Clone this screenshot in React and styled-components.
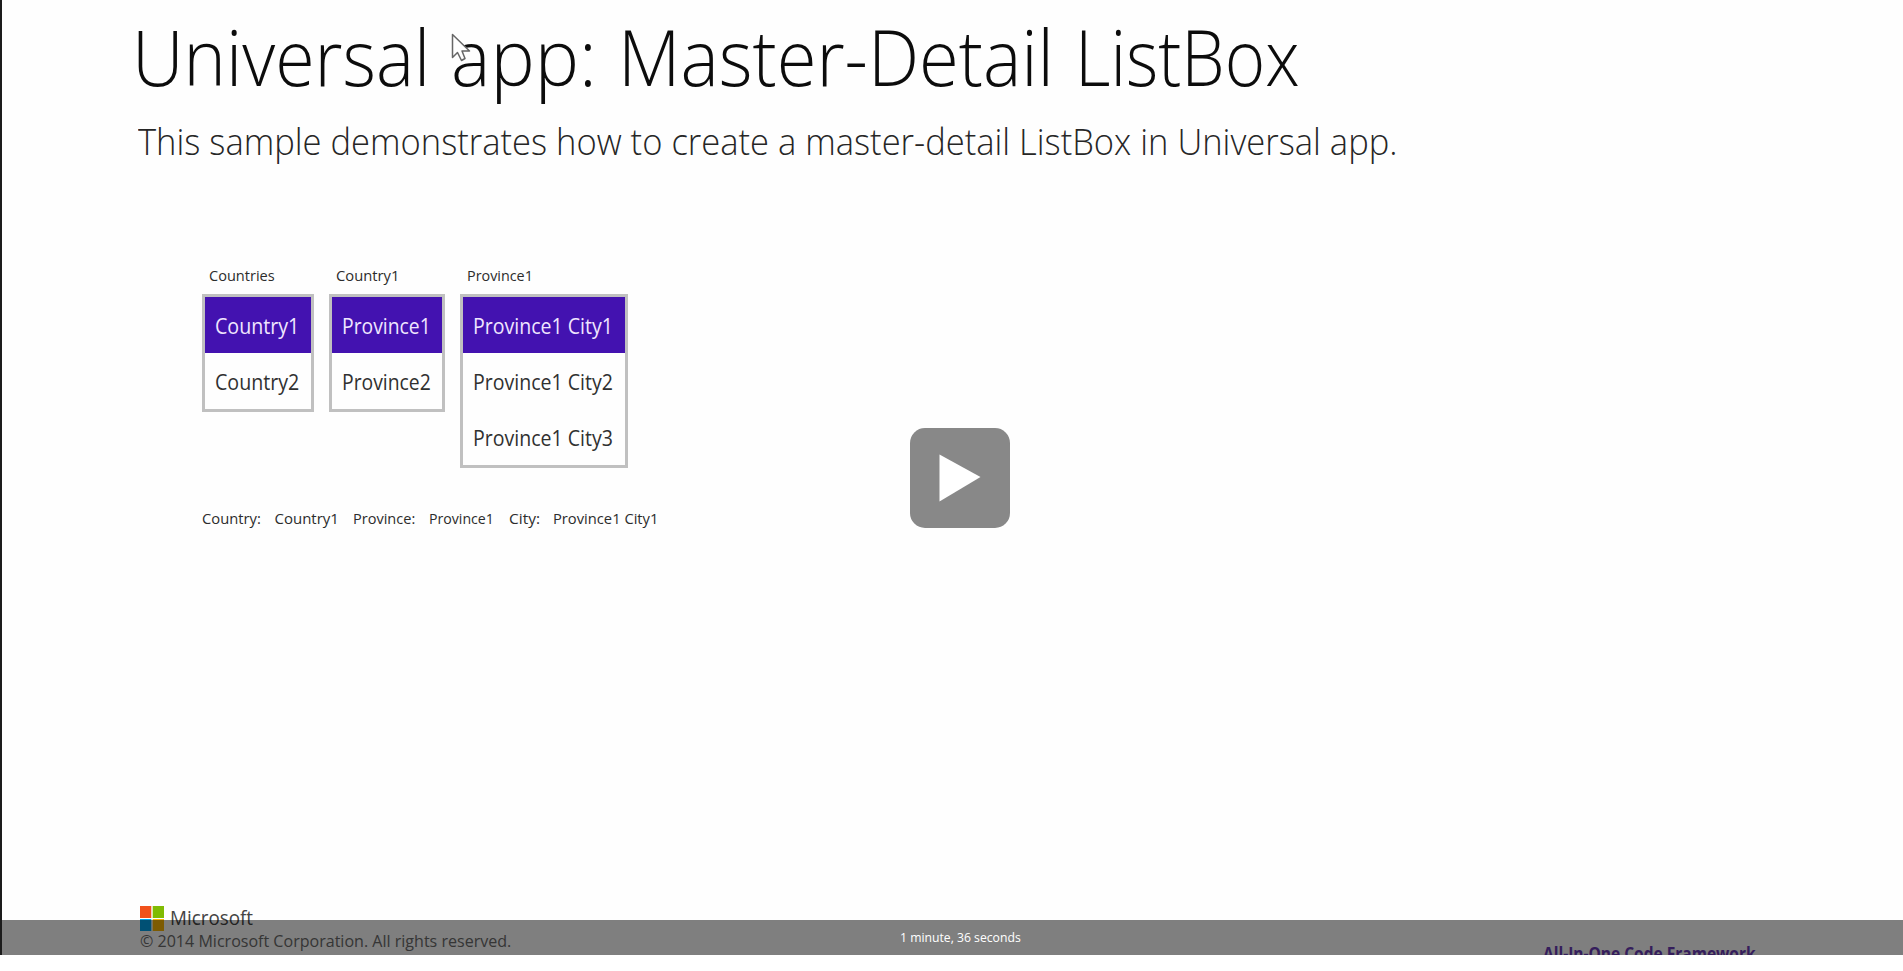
import React, { useLayoutEffect, useRef, useState } from "react";
import styled, { createGlobalStyle } from "styled-components";

const GlobalStyle = createGlobalStyle`
  * { box-sizing: border-box; }
  body { margin: 0; background: #fff; overflow: hidden; }
`;

const Player = styled.main`
  position: relative;
  display: flex;
  flex-direction: column;
  height: 955px;
  overflow: hidden;
  background: #fefefe;
  border-left: 2px solid #1c1c1c;
  font-family: "Open Sans", "Noto Sans", sans-serif;
  color: #333;
`;

const Header = styled.header`
  display: flex;
  flex-direction: column;
  padding: 16px 0 0 130px;
`;

const Line = styled.span`
  display: block;
  flex: none;
  width: ${(p) => p.$width}px;
  white-space: nowrap;
`;

const LineInner = styled.span`
  display: inline-block;
  transform-origin: 0 50%;
`;

/* Stretches a line of type horizontally so that it fills its measure. */
function FitLine({ width, children }) {
  const ref = useRef(null);
  const [scale, setScale] = useState(1);
  useLayoutEffect(() => {
    const measure = () => {
      if (ref.current) setScale(width / ref.current.offsetWidth);
    };
    measure();
    document.fonts.ready.then(measure);
  }, [width]);
  return (
    <Line $width={width}>
      <LineInner ref={ref} style={{ transform: `scaleX(${scale})` }}>
        {children}
      </LineInner>
    </Line>
  );
}

const Title = styled.h1`
  display: flex;
  gap: 21px;
  margin: 0;
  font-size: 78px;
  line-height: 80px;
  font-weight: 300;
  color: #0c0c0c;
`;

const Subtitle = styled.p`
  margin: 25px 0 0 6px;
  font-size: 36.5px;
  line-height: 40px;
  font-weight: 300;
  color: #262626;
`;

const Lists = styled.section`
  display: flex;
  align-items: flex-start;
  gap: 15px;
  height: 243px;
  margin: 104px 0 0 200px;
`;

const Column = styled.div`
  display: flex;
  flex-direction: column;
  width: ${(p) => p.$width}px;
`;

const Caption = styled.div`
  height: 29px;
  padding-left: 6.5px;
  font-size: 15px;
  line-height: 20px;
  color: #2c2c2c;
`;

const ListBox = styled.ul`
  margin: 0;
  padding: 0;
  list-style: none;
  border: 3px solid #c0c0c0;
`;

const Item = styled.li`
  height: 56px;
  padding: 1px 0 0 10px;
  font-size: 21.5px;
  line-height: 56px;
  color: ${(p) => (p.$selected ? "#f0e6ff" : "#303030")};
  background: ${(p) => (p.$selected ? "#4312b0" : "transparent")};
`;

const Status = styled.div`
  display: flex;
  margin-left: 199.5px;
  font-size: 15px;
  line-height: 20px;
  color: #2c2c2c;
`;

const Field = styled.span`
  margin-right: ${(p) => p.$gap}px;
`;

const Footer = styled.footer`
  display: flex;
  justify-content: space-between;
  margin-top: auto;
  height: 50px;
  padding: 0 147px 0 138px;
`;

const Legal = styled.div`
  display: flex;
  flex-direction: column;
  font-size: 17px;
  line-height: 20px;
  color: #6c6c6c;
`;

const Brand = styled.div`
  display: flex;
  align-items: flex-start;
  gap: 5.5px;
  height: 26px;
  font-size: 19.5px;
  line-height: 26px;
  color: #444;
`;

const Logo = styled.svg`
  width: 24px;
  height: 25px;
  margin-top: 0.5px;
`;

const Framework = styled.div`
  padding-top: 36px;
  font-size: 18.5px;
  line-height: 24px;
  font-weight: 700;
  color: #6a3cb8;
`;

const TimeBar = styled.div`
  position: absolute;
  left: -2px;
  right: 0;
  bottom: 0;
  height: 35px;
  padding-left: 17px;
  display: flex;
  justify-content: center;
  background: rgba(0, 0, 0, 0.5);
  color: #fff;
  font-size: 12.5px;
  line-height: 35px;
`;

const PlayButton = styled.button`
  position: absolute;
  left: 908px;
  top: 428px;
  width: 100px;
  height: 100px;
  padding: 0;
  border: 0;
  border-radius: 15px;
  background: #888;
`;

const Pointer = styled.svg`
  position: absolute;
  left: 449px;
  top: 33px;
  width: 21px;
  height: 30px;
`;

const TITLE = [
  { text: "Universal", width: 298 },
  { text: "app:", width: 146 },
  { text: "Master-Detail", width: 436 },
  { text: "ListBox", width: 225 },
];

const LISTS = [
  { caption: "Countries", captionWidth: 66, width: 112, textWidth: 84, items: ["Country1", "Country2"] },
  { caption: "Country1", captionWidth: 63, width: 116, textWidth: 89, items: ["Province1", "Province2"] },
  { caption: "Province1", captionWidth: 66, width: 168, textWidth: 140, items: ["Province1 City1", "Province1 City2", "Province1 City3"] },
];

const FIELDS = [
  { text: "Country:", width: 59, gap: 14 },
  { text: "Country1", width: 64, gap: 14 },
  { text: "Province:", width: 62, gap: 14 },
  { text: "Province1", width: 65, gap: 15 },
  { text: "City:", width: 31, gap: 13 },
  { text: "Province1 City1", width: 105, gap: 0 },
];

export default function App() {
  return (
    <>
      <GlobalStyle />
      <Player>
        <Header>
          <Title>
            {TITLE.map((word) => (
              <FitLine key={word.text} width={word.width}>{word.text}</FitLine>
            ))}
          </Title>
          <Subtitle>
            <FitLine width={1259}>
              This sample demonstrates how to create a master-detail ListBox in Universal app.
            </FitLine>
          </Subtitle>
        </Header>

        <Lists>
          {LISTS.map((list) => (
            <Column key={list.caption} $width={list.width}>
              <Caption><FitLine width={list.captionWidth}>{list.caption}</FitLine></Caption>
              <ListBox>
                {list.items.map((item, i) => (
                  <Item key={item} $selected={i === 0}>
                    <FitLine width={list.textWidth}>{item}</FitLine>
                  </Item>
                ))}
              </ListBox>
            </Column>
          ))}
        </Lists>

        <Status>
          {FIELDS.map((f) => (
            <Field key={f.text} $gap={f.gap}>
              <FitLine width={f.width}>{f.text}</FitLine>
            </Field>
          ))}
        </Status>

        <Footer>
          <Legal>
            <Brand>
              <Logo viewBox="0 0 24 25">
                <rect x="0" y="0" width="11.3" height="12" fill="#f1511b" />
                <rect x="12.7" y="0" width="11.3" height="12" fill="#80bb03" />
                <rect x="0" y="13" width="11.3" height="12" fill="#00a1e8" />
                <rect x="12.7" y="13" width="11.3" height="12" fill="#fbb704" />
              </Logo>
              <FitLine width={83}>Microsoft</FitLine>
            </Brand>
            <FitLine width={371}>© 2014 Microsoft Corporation. All rights reserved.</FitLine>
          </Legal>
          <Framework><FitLine width={213}>All-In-One Code Framework</FitLine></Framework>
        </Footer>

        <Pointer viewBox="0 0 21 30">
          <path
            d="M1.5 1.5 V24.5 L6.5 19.5 L10.5 27.5 L14 25.5 L11 18 H18.5 Z"
            fill="#fefefe"
            stroke="#666"
            strokeWidth="1.5"
            strokeLinejoin="round"
          />
        </Pointer>

        <PlayButton aria-label="Play">
          <svg width="100" height="100" viewBox="0 0 100 100">
            <path d="M29.5 26.5 L70.5 49 L29.5 73.5 Z" fill="#fff" />
          </svg>
        </PlayButton>

        <TimeBar><FitLine width={121}>1 minute, 36 seconds</FitLine></TimeBar>
      </Player>
    </>
  );
}
